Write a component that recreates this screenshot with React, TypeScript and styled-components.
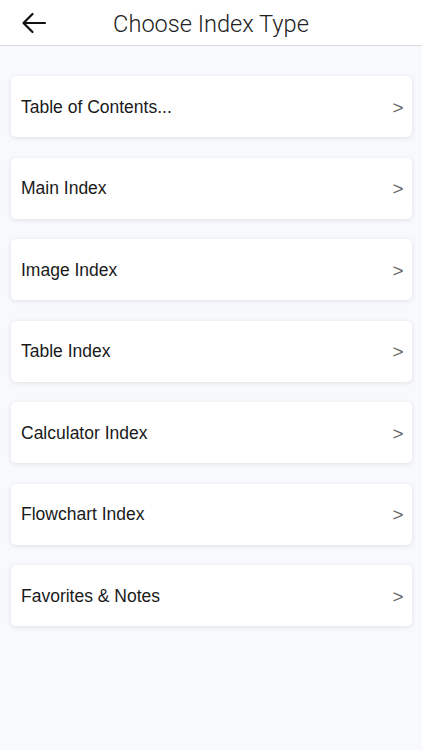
import React from 'react'
import styled, { createGlobalStyle } from 'styled-components'

const GlobalStyle = createGlobalStyle`
  html, body {
    margin: 0;
    padding: 0;
    background: #f8f9fc;
  }
  * {
    box-sizing: border-box;
  }
`

const items = [
  'Table of Contents...',
  'Main Index',
  'Image Index',
  'Table Index',
  'Calculator Index',
  'Flowchart Index',
  'Favorites & Notes',
]

const App: React.FC = () => {
  return (
    <Page>
      <GlobalStyle />
      <Header>
        <BackButton aria-label="Back">
          <svg width="26" height="22" viewBox="0 0 26 22" fill="none">
            <path d="M24 11H3M11.5 2L2.5 11l9 9" stroke="#111" strokeWidth="2.2" strokeLinecap="round" strokeLinejoin="round" />
          </svg>
        </BackButton>
        <Title>Choose Index Type</Title>
      </Header>
      <List>
        {items.map((label) => (
          <Card key={label}>
            <Label>{label}</Label>
            <Chevron>&gt;</Chevron>
          </Card>
        ))}
      </List>
    </Page>
  )
}

const Page = styled.div`
  min-height: 750px;
  background: #f8f9fc;
  font-family: 'Liberation Sans', Arial, sans-serif;
`

const Header = styled.div`
  position: relative;
  height: 46px;
  background: #ffffff;
  border-bottom: 1px solid #d9d9de;
  display: flex;
  align-items: center;
  justify-content: center;
`

const BackButton = styled.div`
  position: absolute;
  left: 21px;
  top: 12px;
  display: flex;
`

const Title = styled.div`
  font-family: Roboto, sans-serif;
  font-weight: 300;
  font-size: 23.6px;
  color: #222;
  margin-top: 2px;
`

const List = styled.div`
  display: flex;
  flex-direction: column;
  gap: 20.5px;
  padding: 30px 10.5px 0 11px;
`

const Card = styled.div`
  height: 61px;
  background: #ffffff;
  border-radius: 5px;
  box-shadow: 0 1px 5px rgba(0, 0, 0, 0.1);
  display: flex;
  align-items: center;
  justify-content: space-between;
  padding: 0 8px 0 10px;
`

const Label = styled.div`
  font-size: 17.5px;
  color: #1a1a1a;
  margin-top: 1px;
`

const Chevron = styled.div`
  font-size: 19px;
  color: #666;
  margin-top: 2px;
`

export default App
